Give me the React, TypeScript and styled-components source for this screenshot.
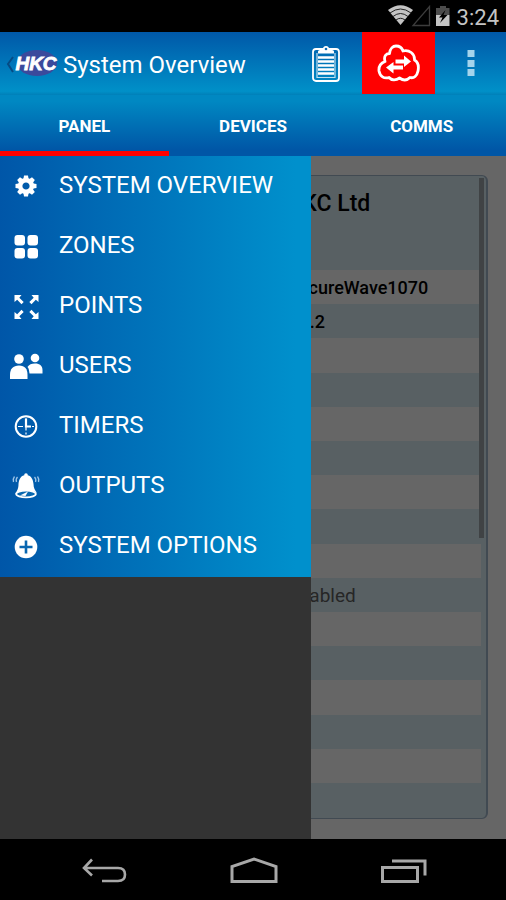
import React from "react";
import styled, { createGlobalStyle } from "styled-components";

const GlobalStyle = createGlobalStyle`
  *, *::before, *::after { box-sizing: border-box; }
  body {
    margin: 0;
    background: #000;
    font-family: Roboto, "Liberation Sans", sans-serif;
    color: #fff;
  }
  h1, h2, ul { margin: 0; padding: 0; }
  button {
    border: 0;
    padding: 0;
    background: none;
    color: inherit;
    font: inherit;
    cursor: pointer;
  }
  svg { display: block; flex: none; }
`;

const Screen = styled.div`
  display: flex;
  flex-direction: column;
  min-height: 100vh;
`;

const StatusBar = styled.div`
  display: flex;
  justify-content: flex-end;
  align-items: center;
  height: 32px;
  padding-right: 7px;
  background: #000;
`;

const Clock = styled.span`
  margin-left: 7px;
  padding-top: 3px;
  font-size: 22px;
  line-height: 28px;
  color: #c4c4c4;
`;

const AppBar = styled.header`
  display: flex;
  align-items: stretch;
  height: 63px;
  background: linear-gradient(#0058a8, #0090c8 94%, #007fb8);
`;

const HomeButton = styled.button`
  display: flex;
  align-items: center;
  padding-left: 6px;
`;

const Title = styled.h1`
  flex: 1;
  align-self: center;
  padding: 2px 0 0 4px;
  font-size: 24px;
  line-height: 32px;
  font-weight: 400;
  white-space: nowrap;
`;

const BarAction = styled.button<{ $alert?: boolean }>`
  display: flex;
  align-items: center;
  justify-content: center;
  width: ${(p) => (p.$alert ? 73 : 71)}px;
  margin-bottom: 1px;
  background: ${(p) => (p.$alert ? "#ff0000" : "transparent")};
`;

const Tabs = styled.nav`
  display: flex;
  height: 61px;
  background: linear-gradient(#0088c2 10%, #0056a6 90%);
`;

const Tab = styled.button<{ $active?: boolean }>`
  flex: 1;
  padding-top: 5px;
  border-bottom: 5px solid ${(p) => (p.$active ? "#ff0000" : "transparent")};
  font-size: 17px;
  line-height: 24px;
  font-weight: 700;
`;

const Body = styled.main`
  position: relative;
  flex: 1;
  display: flex;
  padding: 19px 18px 20px;
  background: #fff;
`;

const Card = styled.section`
  position: relative;
  flex: 1;
  display: flex;
  flex-direction: column;
  padding: 0 5px 0 2px;
  border: 1px solid #a4b8cc;
  border-right-width: 2px;
  border-radius: 6px;
  background: #dcf0f8;
  color: #000;
`;

const CardTitle = styled.h2`
  height: 94px;
  padding: 12px 0 0 calc(50% + 35px);
  font-size: 23px;
  line-height: 32px;
  font-weight: 500;
  white-space: nowrap;
`;

const Rows = styled.div`
  flex: 1;
  display: flex;
  flex-direction: column;
  padding-bottom: 35px;
`;

const Row = styled.div<{ $dim?: boolean }>`
  flex: 1 0 32px;
  display: flex;
  align-items: center;
  padding: 2px 0 0 calc(50% + 37px);
  font-size: ${(p) => (p.$dim ? 19 : 18)}px;
  line-height: 24px;
  font-weight: ${(p) => (p.$dim ? 400 : 500)};
  color: ${(p) => (p.$dim ? "#606060" : "#000")};
  &:nth-child(odd) { background: #fff; }
`;

const ScrollThumb = styled.div`
  position: absolute;
  top: 2px;
  right: 2px;
  width: 5px;
  height: 56%;
  background: #a0a8ac;
`;

const Scrim = styled.div`
  position: absolute;
  inset: 0;
  background: rgba(0, 0, 0, 0.6);
`;

const Drawer = styled.aside`
  position: absolute;
  inset: 0 auto 0 0;
  width: 311px;
  max-width: 85%;
  background: #333;
`;

const Menu = styled.ul`
  list-style: none;
  padding-bottom: 1px;
  background: linear-gradient(90deg, #0056a8, #0090cc 95%);
`;

const MenuItem = styled.button`
  display: flex;
  align-items: center;
  gap: 15px;
  width: 100%;
  height: 60px;
  padding-left: 8px;
  font-size: 24px;
  line-height: 32px;
  text-align: left;
  white-space: nowrap;
`;

const MenuLabel = styled.span`
  padding-bottom: 2px;
`;

const NavBar = styled.footer`
  display: flex;
  justify-content: center;
  gap: 70px;
  height: 61px;
  padding-left: 2px;
  background: #000;
`;

const NavButton = styled.button`
  display: flex;
  align-items: center;
  justify-content: center;
  width: 80px;
  padding-top: 3px;
`;

const GearIcon = () => (
  <svg width="36" height="36" viewBox="-18 -18 36 36" fill="#fff">
    {[0, 45, 90, 135, 180, 225, 270, 315].map((a) => (
      <path key={a} d="M-2.8-6L-2-10.5H2L2.8-6Z" transform={`rotate(${a})`} />
    ))}
    <circle r="5.8" fill="none" stroke="#fff" strokeWidth="4.4" />
  </svg>
);

const ZonesIcon = () => (
  <svg width="36" height="36" viewBox="0 0 36 36" fill="#fff">
    <rect x="6.500" y="7" width="10.500" height="10.500" rx="3" />
    <rect x="19.500" y="7" width="10.500" height="10.500" rx="3" />
    <rect x="6.500" y="20" width="10.500" height="10.500" rx="3" />
    <rect x="19.500" y="20" width="10.500" height="10.500" rx="3" />
  </svg>
);

const PointsIcon = () => (
  <svg width="36" height="36" viewBox="-18 -19 36 36" fill="#fff">
    {[0, 90, 180, 270].map((a) => (
      <path key={a} d="M-12-12H-5L-7.200-9.300L-2.800-5L-5-2.800L-9.300-7.200L-12-5Z" transform={`translate(.5 0) rotate(${a})`} />
    ))}
  </svg>
);

const UsersIcon = () => (
  <svg width="36" height="36" viewBox="0 0 36 36" fill="#fff">
    <circle cx="11" cy="11" r="4.800" />
    <path d="M2 31V27C2 21 5 17.500 11 17.500S19.500 21 19.500 27V31Z" />
    <circle cx="27" cy="10" r="4.300" />
    <path d="M21.500 25.500C21 21 20.500 20 19.500 19C21 16.500 23.500 15.500 27 15.500C32 15.500 34.500 18 34.500 22V25.500Z" />
  </svg>
);

const ClockIcon = () => (
  <svg width="36" height="36" viewBox="-18 -18.500 36 36" fill="none" stroke="#fff">
    <circle r="10.300" strokeWidth="2" />
    <path d="M0-8V0H5" strokeWidth="2.200" />
    <path d="M-8 0H8M0-8V8" strokeWidth="1.200" strokeDasharray="5 2" />
  </svg>
);

const BellIcon = () => (
  <svg width="36" height="36" viewBox="0 0 36 36">
    <path d="M18 7C23 7 25 11 25.500 16C25.500 20 27 22 29 25C25 22 12 22 7 26C9 23 10.500 21 10.500 16C11 11 13 7 18 7Z" fill="#fff" />
    <ellipse cx="18" cy="26" rx="9.800" ry="3.400" fill="#0868b0" stroke="#fff" strokeWidth="1.800" />
    <path d="M12 27.500L20 23.500L17.500 28Z" fill="#fff" />
    <circle cx="18" cy="7" r="1.800" fill="#fff" />
    <path d="M9.500 9Q7.500 11 8.500 14M6.500 8.500Q4.500 11 5.500 14M26.500 9Q28.500 11 27.500 14M29.500 8.500Q31.500 11 30.500 14" fill="none" stroke="#9cc4e8" strokeWidth="1.300" />
  </svg>
);

const PlusIcon = () => (
  <svg width="36" height="36" viewBox="-18 -19 36 36">
    <circle r="11.300" fill="#fff" />
    <path d="M-6.500 0H6.500M0-6.500V6.500" stroke="#0866b0" strokeWidth="2.600" />
  </svg>
);

const BrandLogo = () => (
  <svg width="53" height="32" viewBox="0 0 53 32" role="img" aria-label="HKC">
    <path d="M7 9L2 16L7 24" fill="none" stroke="#064b84" strokeWidth="2" />
    <ellipse cx="31" cy="15" rx="20" ry="13" fill="#3b4a9c" />
    <text
      x="30"
      y="22"
      textAnchor="middle"
      fontFamily="'Liberation Sans', sans-serif"
      fontSize="19"
      fontWeight="700"
      fontStyle="italic"
      fill="#fff"
      stroke="#fff"
      strokeWidth=".8"
    >
      HKC
    </text>
  </svg>
);

const ClipboardIcon = () => (
  <svg width="30" height="37" viewBox="0 0 30 37" fill="none" stroke="#fff">
    <rect x="1" y="4" width="26" height="32" rx="3" strokeWidth="1.800" />
    <path d="M5 8V32.500H23V8" strokeWidth="1.200" opacity=".75" />
    <path d="M6 8.500V6.500Q6 5 8 5H10.500Q11 1 14 1T17.500 5H20Q22 5 22 6.500V8.500Z" fill="#fff" stroke="none" />
    <circle cx="14" cy="4" r="1.300" fill="#0b6bb3" stroke="none" />
    <path d="M6 12.500H22M6 16.500H22M6 20.500H22M6 24.500H22M6 28.500H22" strokeWidth="2.400" />
  </svg>
);

const CloudIcon = () => (
  <svg width="44" height="38" viewBox="0 0 44 38" fill="none" stroke="#fff">
    <path
      d="M8 17.500C6.500 12 9 9.500 12.500 9.500C13 4.500 16 2 19 2C23 2 25 4 26 7C32 5.500 38 9.500 37.500 16C41 18 42 22 41 27C40 32 37 34.500 33 33.500C30 36.500 26 36.500 22.500 34C19 36.500 14.500 36.500 12 33.500C7 35 3 32.500 2 27C1.500 22 4 19 8 17.500Z"
      strokeWidth="2.800"
      strokeLinejoin="round"
    />
    <path d="M18.500 15.500H27V11.500L34 17.500L27 23V19.500H18.500ZM26 21.500H16.500V18L9 23.500L16.500 29.500V25.500H26Z" fill="#fff" stroke="none" />
  </svg>
);

const MoreIcon = () => (
  <svg width="8" height="28" viewBox="0 0 8 28" fill="#a4d4ec">
    <rect x=".500" y="1" width="7" height="7" />
    <rect x=".500" y="11" width="7" height="7" />
    <rect x=".500" y="20" width="7" height="7" />
  </svg>
);

const StatusIcons = () => (
  <svg width="62" height="22" viewBox="0 0 62 22">
    <path d="M0 5Q12.500-4.500 25 5L12.500 20Z" fill="#c4c4c4" />
    <path d="M2 8Q12.500 0 23 8M5 11.500Q12.500 5.500 20 11.500M8 15Q12.500 11.500 17 15" fill="none" stroke="#202020" strokeWidth="1" />
    <path d="M41.500 1.500V20.500H25Z" fill="none" stroke="#3c3c3c" strokeWidth="1.300" />
    <path d="M48 3H52V1H58V3H61.500V10H48Z" fill="#4c4c4c" />
    <path d="M48 10H61.500V21H48Z" fill="#c4c4c4" />
    <path d="M57.500 5L51 12.500H54.500L52 18L59.500 10H55.500Z" fill="#000" />
  </svg>
);

const BackIcon = () => (
  <svg width="46" height="28" viewBox="0 0 46 28" fill="none" stroke="#a8a8a8" strokeWidth="2.600">
    <path d="M11 2.500L3 11L11 18.500M3 11H37Q44 11 44 17.500T37 24H21" />
  </svg>
);

const HomeIcon = () => (
  <svg width="50" height="28" viewBox="0 0 50 28" fill="none" stroke="#a8a8a8" strokeWidth="3">
    <path d="M3 24.500V9.500L25 2L47 9.500V24.500Z" />
  </svg>
);

const RecentsIcon = () => (
  <svg width="46" height="28" viewBox="0 0 46 28" fill="none" stroke="#a8a8a8" strokeWidth="3">
    <rect x="1.500" y="10.500" width="35" height="14" />
    <path d="M11 4H44V18.500" />
  </svg>
);

const menu = [
  { label: "SYSTEM OVERVIEW", Icon: GearIcon },
  { label: "ZONES", Icon: ZonesIcon },
  { label: "POINTS", Icon: PointsIcon },
  { label: "USERS", Icon: UsersIcon },
  { label: "TIMERS", Icon: ClockIcon },
  { label: "OUTPUTS", Icon: BellIcon },
  { label: "SYSTEM OPTIONS", Icon: PlusIcon },
];

const tabs = ["PANEL", "DEVICES", "COMMS"];

const rows = ["SecureWave1070", "V1.2", "", "", "", "", "", "", "", "Enabled", "", "", "", "", ""];

export default function App() {
  return (
    <Screen>
      <GlobalStyle />
      <StatusBar>
        <StatusIcons />
        <Clock>3:24</Clock>
      </StatusBar>
      <AppBar>
        <HomeButton aria-label="Navigate up">
          <BrandLogo />
        </HomeButton>
        <Title>System Overview</Title>
        <BarAction aria-label="Log">
          <ClipboardIcon />
        </BarAction>
        <BarAction $alert aria-label="Cloud connection">
          <CloudIcon />
        </BarAction>
        <BarAction aria-label="More options">
          <MoreIcon />
        </BarAction>
      </AppBar>
      <Tabs>
        {tabs.map((t, i) => (
          <Tab key={t} $active={i === 0}>
            {t}
          </Tab>
        ))}
      </Tabs>
      <Body>
        <Card>
          <CardTitle>HKC Ltd</CardTitle>
          <Rows>
            {rows.map((value, i) => (
              <Row key={i} $dim={value === "Enabled"}>
                {value}
              </Row>
            ))}
          </Rows>
          <ScrollThumb />
        </Card>
        <Scrim />
        <Drawer>
          <Menu>
            {menu.map(({ label, Icon }) => (
              <li key={label}>
                <MenuItem>
                  <Icon />
                  <MenuLabel>{label}</MenuLabel>
                </MenuItem>
              </li>
            ))}
          </Menu>
        </Drawer>
      </Body>
      <NavBar>
        <NavButton aria-label="Back">
          <BackIcon />
        </NavButton>
        <NavButton aria-label="Home">
          <HomeIcon />
        </NavButton>
        <NavButton aria-label="Recent apps">
          <RecentsIcon />
        </NavButton>
      </NavBar>
    </Screen>
  );
}
